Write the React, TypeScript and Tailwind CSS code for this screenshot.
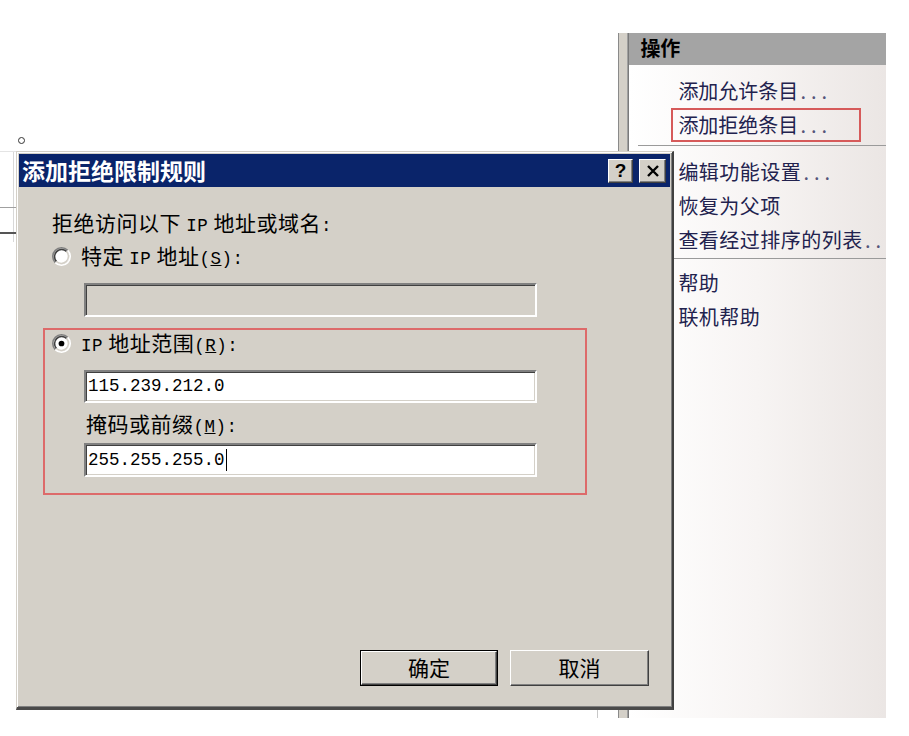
import React from "react";

function Lat({ children }: { children: React.ReactNode }) {
  return <span className="font-['Liberation_Mono',monospace] text-[17.5px]">{children}</span>;
}

function Radio({ checked }: { checked?: boolean }) {
  return (
    <svg width="19" height="19" viewBox="0 0 12 12" className="shrink-0">
      <circle cx="6" cy="6" r="5" fill="#ffffff" />
      <path d="M2.11 9.89 A5.5 5.5 0 0 1 9.89 2.11" stroke="#808080" strokeWidth="1" fill="none" />
      <path d="M2.82 9.18 A4.5 4.5 0 0 1 9.18 2.82" stroke="#404040" strokeWidth="1" fill="none" />
      <path d="M9.89 2.11 A5.5 5.5 0 0 1 2.11 9.89" stroke="#ffffff" strokeWidth="1" fill="none" />
      <path d="M9.18 2.82 A4.5 4.5 0 0 1 2.82 9.18" stroke="#d4d0c8" strokeWidth="1" fill="none" />
      {checked && <circle cx="6" cy="6" r="1.8" fill="#000000" />}
    </svg>
  );
}

function Sunken({ className, children, disabled }: { className: string; children?: React.ReactNode; disabled?: boolean }) {
  return (
    <div
      className={
        "border-2 border-t-[#808080] border-l-[#808080] border-b-white border-r-white shadow-[inset_1px_1px_0_#404040,inset_-1px_-1px_0_#d4d0c8] flex items-center pl-[2px] " +
        (disabled ? "bg-[#d4d0c8] " : "bg-white ") +
        className
      }
    >
      {children}
    </div>
  );
}

function Item({ text, dots, boxed }: { text: string; dots?: string; boxed?: boolean }) {
  return (
    <div
      className={
        "ml-[42px] w-[190px] h-[34px] pl-[5px] flex items-center whitespace-nowrap text-[20px] text-[#22224e] border-2 " +
        (boxed ? "border-[#d65a5a]" : "border-transparent")
      }
    >
      <span>{text}</span>
      {dots && <span className="text-[#55557a] tracking-[5px] ml-[2px]">{dots}</span>}
    </div>
  );
}

function Item2({ text, dots }: { text: string; dots?: string }) {
  return (
    <div className="ml-[49px] h-[34px] flex items-center whitespace-nowrap text-[20px] tracking-[0.5px] text-[#22224e]">
      <span>{text}</span>
      {dots && <span className="text-[#55557a] tracking-[5px] ml-[2px]">{dots}</span>}
    </div>
  );
}

function Btn({ children, def, className }: { children: React.ReactNode; def?: boolean; className: string }) {
  return (
    <div className={(def ? "border border-black " : "") + "h-[36px] " + className}>
      <div className="w-full h-full bg-[#d4d0c8] border border-t-white border-l-white border-r-[#404040] border-b-[#404040] shadow-[inset_-1px_-1px_0_#808080] flex items-center justify-center text-[21px] text-black">
        {children}
      </div>
    </div>
  );
}

export default function App() {
  return (
    <div className="relative w-[909px] h-[736px] bg-white overflow-hidden font-['Noto_Sans_CJK_SC',sans-serif]">
      {/* left background bits */}
      <div className="absolute left-[18px] top-[137px] w-[7px] h-[7px] rounded-full border border-[#333]" />
      <div className="absolute left-0 top-[151px] w-[620px] h-px bg-[#e4e4e4]" />
      <div className="absolute left-[13px] top-[152px] w-px h-[90px] bg-[#d8d8d8]" />
      <div className="absolute left-0 top-[207px] w-[16px] h-px bg-[#a0a0a0]" />
      <div className="absolute left-0 top-[232px] w-[16px] h-[2px] bg-[#555]" />
      <div className="absolute left-[597px] top-[152px] w-px h-[566px] bg-[#c8c8c8]" />

      {/* actions panel */}
      <div className="absolute left-[618px] top-[33px] w-[268px] h-[685px] flex">
        <div className="w-[12px] h-full bg-[#d4d0c8] border-l border-l-[#8a8a8a] border-r border-r-[#a0a0a0]" />
        <div className="flex-1 flex flex-col border-l border-[#7a7a7a] bg-gradient-to-r from-white via-[#f7f4f3] to-[#ebe6e4]">
          <div className="h-[32px] shrink-0 bg-[#a4a4a4] pl-[11px] pt-[2px] text-[20px] leading-[26px] font-bold text-black">
            操作
          </div>
          <div className="mt-[9px]">
            <Item text="添加允许条目" dots="..." />
            <Item text="添加拒绝条目" dots="..." boxed />
          </div>
          <div className="mt-[3px] ml-[9px] h-px bg-[#9a9a9a]" />
          <div className="mt-[9px]">
            <Item2 text="编辑功能设置" dots="..." />
            <Item2 text="恢复为父项" />
            <Item2 text="查看经过排序的列表" dots=".." />
          </div>
          <div className="mt-px ml-[9px] h-px bg-[#9a9a9a]" />
          <div className="mt-[7px]">
            <Item2 text="帮助" />
            <Item2 text="联机帮助" />
          </div>
        </div>
      </div>

      {/* dialog */}
      <div className="absolute left-[16px] top-[151px] w-[658px] h-[559px] bg-[#d4d0c8] border border-t-[#d4d0c8] border-l-[#d4d0c8] border-r-2 border-r-[#404040] border-b-[3px] border-b-[#4a4a4a] shadow-[inset_1px_1px_0_#ffffff,inset_-1px_-1px_0_#808080] p-[2px] flex flex-col">
        <div className="h-[33px] shrink-0 bg-[#0a246a] flex items-center justify-between pl-[3px] pr-[4px]">
          <span className="text-white font-bold text-[23px] leading-none">添加拒绝限制规则</span>
          <div className="flex gap-[6px]">
            <div className="w-[25px] h-[24px] bg-[#d4d0c8] border border-t-white border-l-white border-r-[#404040] border-b-[#404040] shadow-[inset_-1px_-1px_0_#808080] flex items-center justify-center font-['Liberation_Sans',sans-serif] font-bold text-[19px] leading-none text-black">
              ?
            </div>
            <div className="w-[27px] h-[24px] bg-[#d4d0c8] border border-t-white border-l-white border-r-[#404040] border-b-[#404040] shadow-[inset_-1px_-1px_0_#808080] flex items-center justify-center">
              <svg width="14" height="12" viewBox="0 0 14 12">
                <path d="M2 1 L12 11 M12 1 L2 11" stroke="#000" strokeWidth="2.4" />
              </svg>
            </div>
          </div>
        </div>

        <div className="flex-1 flex flex-col text-[21px] text-black">
          <div className="mt-[20px] ml-[33px] h-[30px] leading-[30px] whitespace-nowrap tracking-[0.5px]">
            拒绝访问以下 <Lat>IP</Lat> 地址或域名<Lat>:</Lat>
          </div>
          <div className="mt-[4px] ml-[33px] h-[30px] flex items-center gap-[10px] whitespace-nowrap tracking-[0.5px]">
            <Radio />
            <span>
              特定 <Lat>IP</Lat> 地址<Lat>
                (<span className="underline">S</span>):
              </Lat>
            </span>
          </div>
          <Sunken disabled className="mt-[12px] ml-[65px] w-[453px] h-[34px]" />

          <div className="mt-[11px] ml-[24px] w-[544px] h-[167px] border-2 border-[#dd6a6a] flex flex-col">
            <div className="ml-[7px] h-[26px] flex items-center gap-[10px] whitespace-nowrap tracking-[0.5px]">
              <Radio checked />
              <span>
                <Lat>IP</Lat> 地址范围<Lat>
                  (<span className="underline">R</span>):
                </Lat>
              </span>
            </div>
            <Sunken className="mt-[14px] ml-[39px] w-[453px] h-[33px]">
              <Lat>115.239.212.0</Lat>
            </Sunken>
            <div className="mt-[7px] ml-[41px] h-[26px] leading-[26px] whitespace-nowrap tracking-[0.5px]">
              掩码或前缀<Lat>
                (<span className="underline">M</span>):
              </Lat>
            </div>
            <Sunken className="mt-[7px] ml-[39px] w-[453px] h-[34px]">
              <Lat>255.255.255.0</Lat>
              <span className="w-px h-[22px] bg-black ml-px" />
            </Sunken>
          </div>

          <div className="mt-auto flex justify-end gap-[12px] pr-[21px] pb-[19px]">
            <Btn def className="w-[138px]">确定</Btn>
            <Btn className="w-[139px]">取消</Btn>
          </div>
        </div>
      </div>
    </div>
  );
}
